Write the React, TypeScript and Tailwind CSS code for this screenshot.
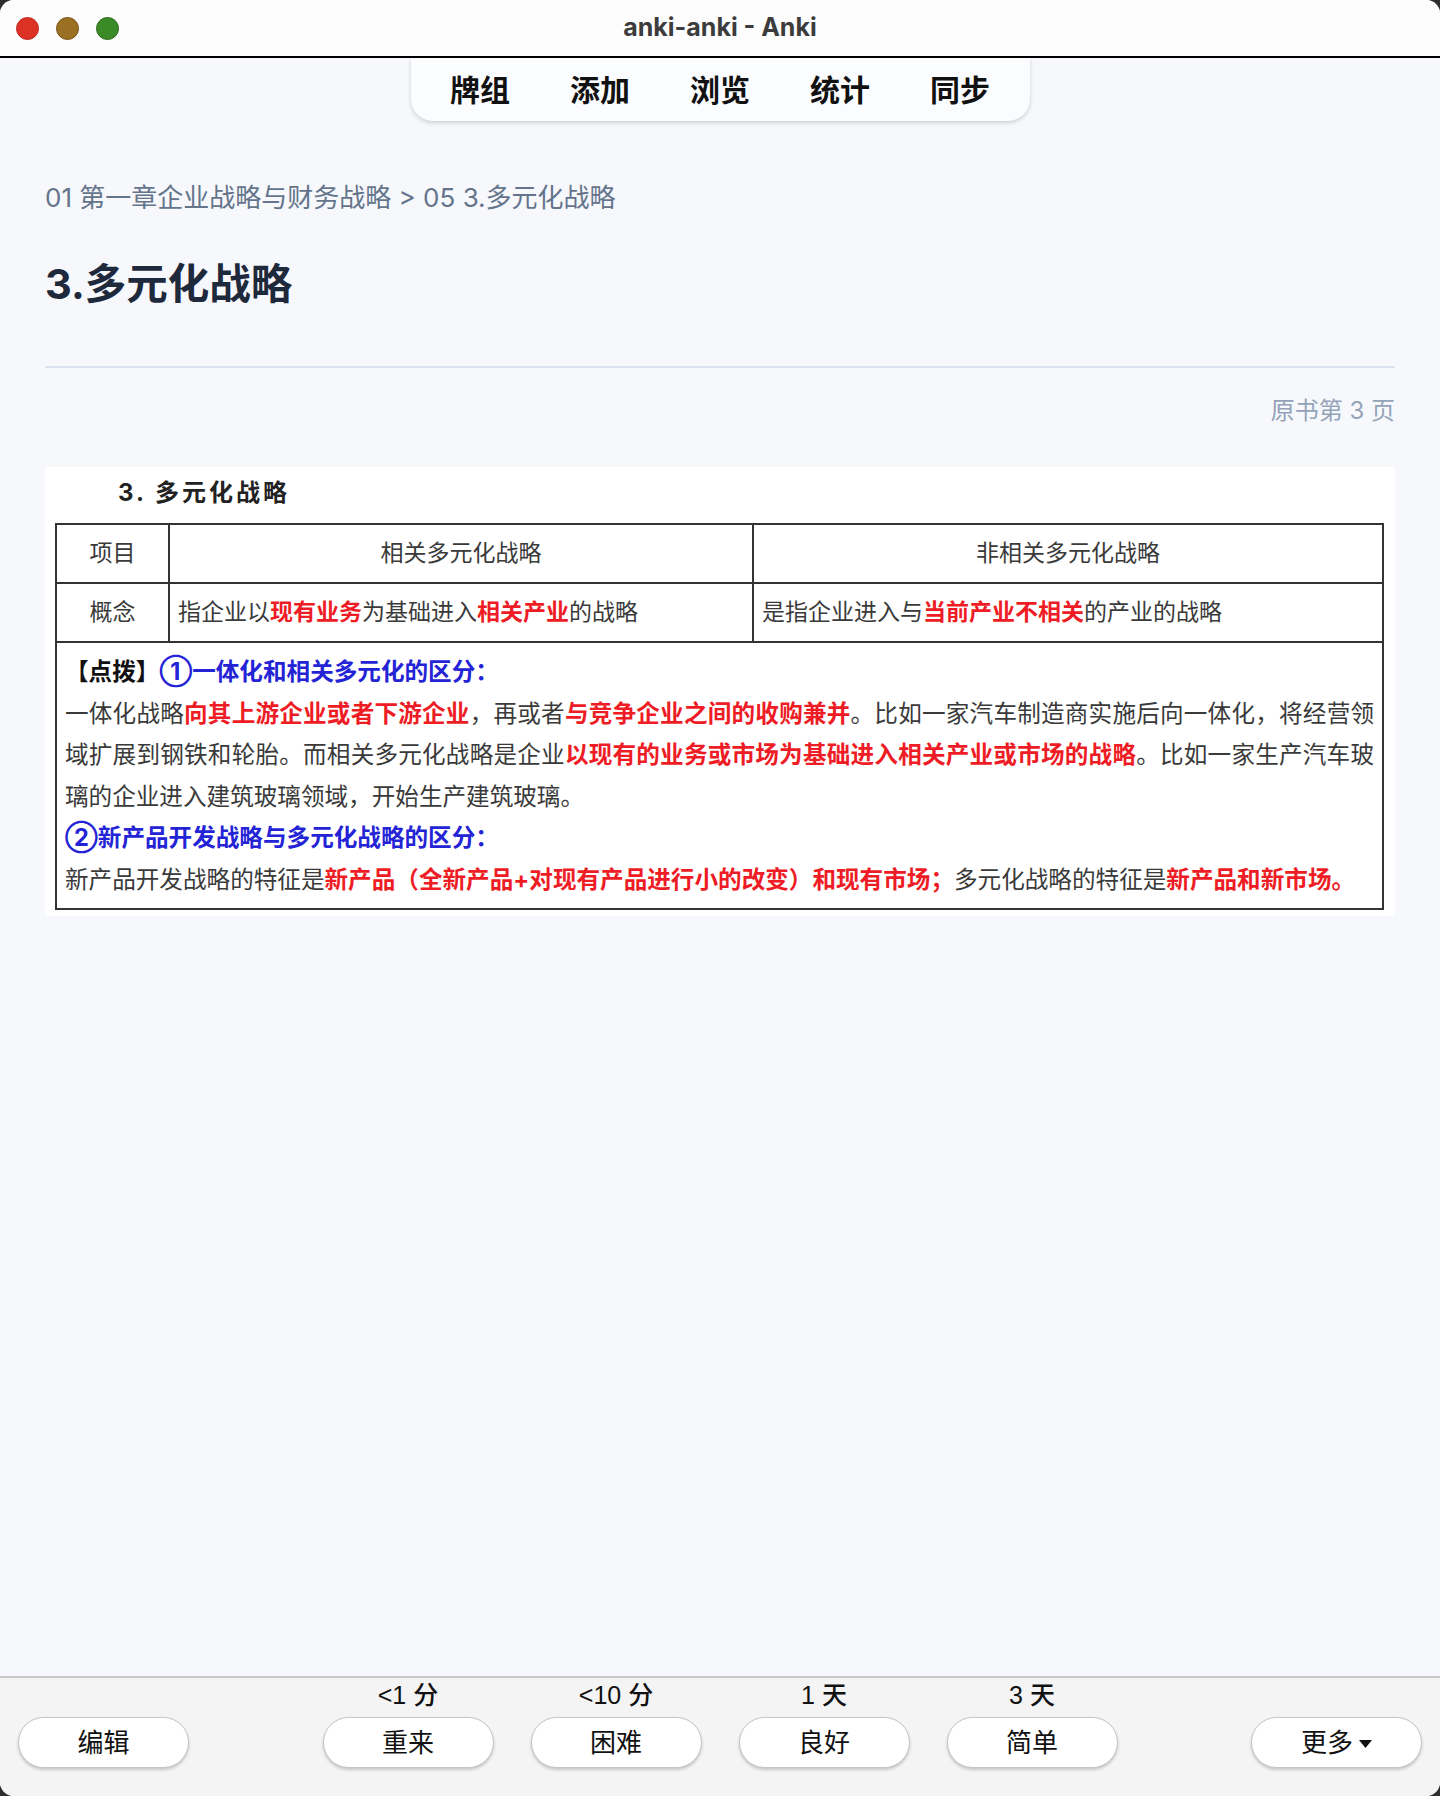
import React from "react";

const R = ({ children }: { children: React.ReactNode }) => (
  <span className="font-bold text-[#ee1c25]">{children}</span>
);
const B = ({ children }: { children: React.ReactNode }) => (
  <span className="font-bold text-[#2424d6]">{children}</span>
);

function Btn({ label, caret }: { label: string; caret?: boolean }) {
  return (
    <div className="w-[171px] h-[51px] rounded-full bg-white border border-[#c4c4c4] shadow-[0_2px_3px_rgba(0,0,0,0.18)] flex items-center justify-center gap-[6px] text-[26px] text-[#111] leading-none">
      <span>{label}</span>
      {caret && (
        <svg width="13" height="8" viewBox="0 0 13 8" className="mt-[2px]">
          <path d="M0 0 L13 0 L6.5 8 Z" fill="#111" />
        </svg>
      )}
    </div>
  );
}

export default function App() {
  const line =
    "block h-[41.5px] leading-[41.5px] whitespace-nowrap text-justify [text-align-last:justify]";
  const plain = "block h-[41.5px] leading-[41.5px] whitespace-nowrap";
  return (
    <div className="w-[1440px] h-[1796px] bg-[#2e2e2e] font-['Inter','Noto_Sans_CJK_SC',sans-serif]">
      <div className="w-full h-full rounded-[14px] overflow-hidden flex flex-col bg-[#f6f8fc]">
        {/* title bar */}
        <div className="relative h-[58px] shrink-0 bg-[#fdfdfd] border-b-2 border-black flex items-center">
          <div className="flex items-center gap-[17px] pl-[16px]">
            <div className="w-[23px] h-[23px] rounded-full bg-[#dc3226] border border-[#c02a1e]" />
            <div className="w-[23px] h-[23px] rounded-full bg-[#9c7022] border border-[#7a5418]" />
            <div className="w-[23px] h-[23px] rounded-full bg-[#3a8a26] border border-[#2a6a1a]" />
          </div>
          <div className="absolute inset-0 flex items-center justify-center text-[25px] font-bold text-[#3c3c3c] pointer-events-none">
            anki-anki - Anki
          </div>
        </div>

        {/* main */}
        <div className="flex-1 flex flex-col">
          <div className="flex justify-center">
            <div className="h-[63px] w-[619px] bg-[#fbfcfe] rounded-b-[22px] shadow-[0_2px_4px_rgba(0,0,0,0.16)] flex items-center justify-center gap-[60px] text-[30px] font-bold text-[#111] leading-none">
              <span>牌组</span>
              <span>添加</span>
              <span>浏览</span>
              <span>统计</span>
              <span>同步</span>
            </div>
          </div>

          <div className="px-[45px]">
            <div className="mt-[59px] h-[36px] leading-[36px] text-[26px] text-[#64748b]">
              01 第一章企业战略与财务战略 &gt; 05 3.多元化战略
            </div>
            <div className="mt-[42px] h-[52px] leading-[52px] text-[41.5px] font-bold text-[#1e293b]">
              3.多元化战略
            </div>
            <div className="mt-[56px] h-[2px] bg-[#dbe3ee]" />
            <div className="mt-[27px] h-[32px] leading-[32px] text-[24px] text-[#94a3b8] text-right">
              原书第 3 页
            </div>

            {/* image box */}
            <div className="mt-[40px] bg-white h-[449px] pt-[11px] px-[10px]">
              <div className="pl-[63px] h-[30px] leading-[30px] text-[24px] font-bold text-[#222] tracking-[3px]">
                3. 多元化战略
              </div>
              <table className="mt-[15px] w-[1329px] table-fixed border-collapse border-2 border-[#333] text-[23px] text-[#3a3a3a]">
                <colgroup>
                  <col className="w-[113px]" />
                  <col className="w-[584px]" />
                  <col />
                </colgroup>
                <tbody>
                  <tr className="h-[59px]">
                    <td className="border-2 border-[#333] text-center">项目</td>
                    <td className="border-2 border-[#333] text-center">相关多元化战略</td>
                    <td className="border-2 border-[#333] text-center">非相关多元化战略</td>
                  </tr>
                  <tr className="h-[59px]">
                    <td className="border-2 border-[#333] text-center">概念</td>
                    <td className="border-2 border-[#333] pl-[8px]">
                      指企业以<R>现有业务</R>为基础进入<R>相关产业</R>的战略
                    </td>
                    <td className="border-2 border-[#333] pl-[8px]">
                      是指企业进入与<R>当前产业不相关</R>的产业的战略
                    </td>
                  </tr>
                  <tr className="h-[267px]">
                    <td
                      colSpan={3}
                      className="border-2 border-[#333] px-[8px] py-[8px] align-top text-[23.6px] text-[#3a3a3a] overflow-hidden"
                    >
                      <span className={plain}>
                        <span className="font-bold text-[#111]">【点拨】</span>
                        <B>①一体化和相关多元化的区分：</B>
                      </span>
                      <span className={line}>
                        一体化战略<R>向其上游企业或者下游企业</R>，再或者<R>与竞争企业之间的收购兼并</R>。比如一家汽车制造商实施后向一体化，将经营领
                      </span>
                      <span className={line}>
                        域扩展到钢铁和轮胎。而相关多元化战略是企业<R>以现有的业务或市场为基础进入相关产业或市场的战略</R>。比如一家生产汽车玻
                      </span>
                      <span className={plain}>璃的企业进入建筑玻璃领域，开始生产建筑玻璃。</span>
                      <span className={plain}>
                        <B>②新产品开发战略与多元化战略的区分：</B>
                      </span>
                      <span className={plain}>
                        新产品开发战略的特征是<R>新产品（全新产品+对现有产品进行小的改变）和现有市场；</R>多元化战略的特征是<R>新产品和新市场。</R>
                      </span>
                    </td>
                  </tr>
                </tbody>
              </table>
            </div>
          </div>
        </div>

        {/* bottom bar */}
        <div className="h-[120px] shrink-0 bg-[#f4f4f4] border-t-2 border-[#c8c8c8] px-[18px] pt-[3px] flex items-start justify-between">
          <div className="pt-[36px]">
            <Btn label="编辑" />
          </div>
          <div className="flex gap-[37px]">
            {[
              ["<1 分", "重来"],
              ["<10 分", "困难"],
              ["1 天", "良好"],
              ["3 天", "简单"],
            ].map(([t, l]) => (
              <div key={l} className="flex flex-col items-center">
                <div className="h-[28px] leading-[28px] text-[25px] font-medium text-[#111] font-['Liberation_Sans','Noto_Sans_CJK_SC',sans-serif]">
                  {t}
                </div>
                <div className="mt-[8px]">
                  <Btn label={l} />
                </div>
              </div>
            ))}
          </div>
          <div className="pt-[36px]">
            <Btn label="更多" caret />
          </div>
        </div>
      </div>
    </div>
  );
}
